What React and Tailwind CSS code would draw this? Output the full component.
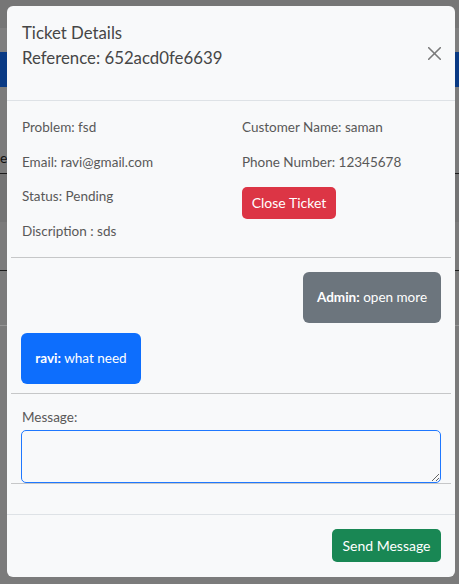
export default function App() {
  return (
    <div className="relative w-[459px] h-[584px] overflow-hidden bg-[#7b7b7b] font-['Lato','Liberation_Sans',sans-serif]">
      {/* page behind the backdrop */}
      <div className="flex flex-col">
        <div className="h-[28px] bg-[#767676]" />
        <div className="h-[24px] bg-[#7f7f7f]" />
        <div className="h-[35px] bg-[#0a3a84]" />
        <div className="h-[86px] bg-[#7b7b7b] flex items-end pb-[8px]">
          <span className="text-[14px] leading-none text-[#111]">er</span>
        </div>
        <div className="h-[1px] bg-[#1c1c1c]" />
        <div className="h-[48px] bg-[#747474]" />
        <div className="h-[48px] bg-[#7b7b7b]" />
        <div className="h-[1px] bg-[#1c1c1c]" />
        <div className="h-[54px] bg-[#7b7b7b]" />
        <div className="h-[1px] bg-[#959595]" />
      </div>

      {/* modal */}
      <div className="absolute left-[7px] top-[6px] w-[448px] h-[571px] rounded-[6px] bg-[#f8f9fa] flex flex-col text-[#585858]">
        <div className="h-[95px] shrink-0 border-b border-[#dee2e6] flex justify-between pl-[15px] pr-[14px] pt-[14px]">
          <div className="text-[16.8px] leading-[25px] text-[#464646]">
            <div>Ticket Details</div>
            <div>Reference: 652acd0fe6639</div>
          </div>
          <button className="mt-[27px] w-[13px] h-[13px] shrink-0">
            <svg width="13" height="13" viewBox="0 0 13 13">
              <path d="M0.7 0.7 L12.3 12.3 M12.3 0.7 L0.7 12.3" stroke="#7a7a7a" strokeWidth="1.6" strokeLinecap="round" />
            </svg>
          </button>
        </div>

        <div className="px-[4px] flex-1">
          <div className="flex pt-[17px] pl-[11px] text-[13.5px]">
            <div className="w-[220px]">
              <p className="leading-[18.7px] mb-[16px]">Problem: fsd</p>
              <p className="leading-[18.7px] mb-[16px]">Email: ravi@gmail.com</p>
              <p className="leading-[18.7px] mb-[16px]">Status: Pending</p>
              <p className="leading-[18.7px] mb-[16px]">Discription : sds</p>
            </div>
            <div>
              <p className="leading-[18.7px] mb-[16px]">Customer Name: saman</p>
              <p className="leading-[18.7px] mb-[16px]">Phone Number: 12345678</p>
              <button className="w-[94px] h-[32px] rounded-[5px] bg-[#dc3545] text-white text-[14px] leading-none">
                Close Ticket
              </button>
            </div>
          </div>

          <div className="h-[1px] bg-[#c6c7c8]" />

          <div className="px-[10px]">
            <div className="flex justify-end mt-[14px]">
              <div className="h-[51px] w-[138px] rounded-[6px] bg-[#6c757d] text-white text-[13.5px] flex items-center justify-center">
                <span><b>Admin:</b> open more</span>
              </div>
            </div>
            <div className="flex justify-start mt-[10px]">
              <div className="h-[51px] w-[120px] rounded-[6px] bg-[#0d6efd] text-white text-[13.5px] flex items-center justify-center">
                <span><b>ravi:</b> what need</span>
              </div>
            </div>
          </div>

          <div className="h-[1px] bg-[#c6c7c8] mt-[9px]" />

          <div className="pl-[11px] pr-[10px] pt-[14px]">
            <div className="text-[13.5px] leading-[19px] mb-[3px]">Message:</div>
            <textarea className="block w-[420px] h-[53px] -ml-[1px] rounded-[5px] border border-[#1f78ff] bg-transparent outline-none" />
          </div>
          <div className="h-[1px] bg-[#c6c7c8]" />
        </div>

        <div className="h-[63px] shrink-0 border-t border-[#dee2e6] flex justify-end items-start pt-[14px] pr-[14px]">
          <button className="w-[109px] h-[33px] rounded-[5px] bg-[#198754] text-white text-[14px] leading-none">
            Send Message
          </button>
        </div>
      </div>
    </div>
  );
}
